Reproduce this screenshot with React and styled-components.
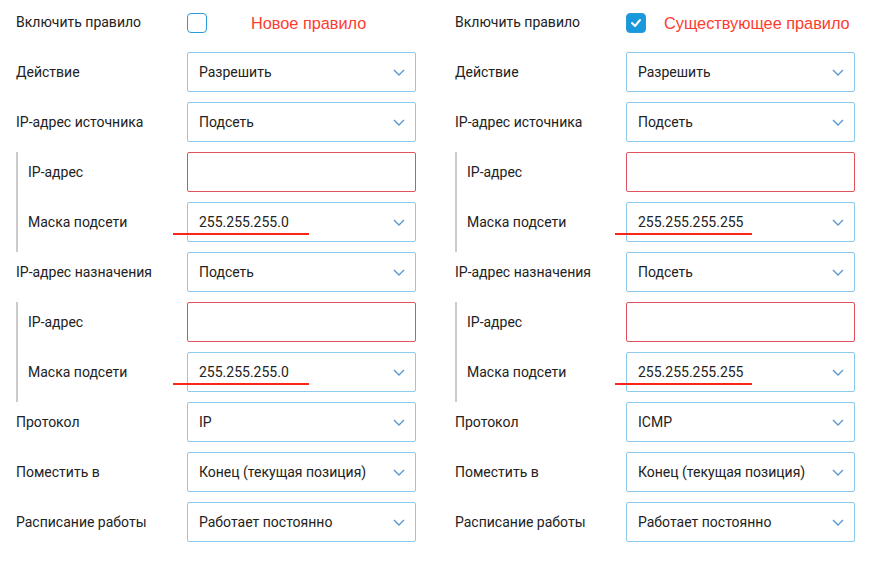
import React from "react";
import styled, {createGlobalStyle} from "styled-components";

const Global = createGlobalStyle`
    html, body {
        margin: 0;
        background: #fff;
    }
    body {
        font-family: Roboto, "Liberation Sans", sans-serif;
        color: #222;
    }
`;

const Page = styled.div`
    display: grid;
    grid-template-columns: 400px 400px;
    column-gap: 39px;
    padding: 2px 0 0 16px;
`;

const Column = styled.div`
    display: flex;
    flex-direction: column;
`;

const Row = styled.div`
    display: flex;
    align-items: center;
    height: 40px;
    margin-bottom: 10px;
    white-space: nowrap;
`;

const Label = styled.div`
    width: ${p => p.$nested ? 159 : 171}px;
    font-size: 14px;
    line-height: 16px;
    color: #222;
    flex-shrink: 0;
`;

const Group = styled.div`
    border-left: 2px solid #cbcbcb;
    padding-left: 10px;
    display: flex;
    flex-direction: column;
`;

const Box = styled.div`
    position: relative;
    box-sizing: border-box;
    width: 230px;
    height: 40px;
    border: 1px solid ${p => p.$error ? "#e0535d" : "#8ccbec"};
    border-radius: 2px;
    display: flex;
    align-items: center;
    justify-content: space-between;
    padding: 0 10px 0 11px;
    font-size: 14px;
    color: #222;
`;

const Strike = styled.div`
    position: absolute;
    left: ${p => p.$left}px;
    width: ${p => p.$width}px;
    top: 30px;
    height: 2px;
    background: #fb2518;
`;

const Check = styled.div`
    box-sizing: border-box;
    width: 20px;
    height: 20px;
    border-radius: 4px;
    border: 1.5px solid #2a9ad8;
    background: ${p => p.$on ? "#1a98dc" : "#fff"};
    display: flex;
    align-items: center;
    justify-content: center;
    flex-shrink: 0;
    margin: 2px ${p => p.$gap}px 0 0;
`;

const Note = styled.span`
    font-family: "Liberation Sans", Arial, sans-serif;
    font-size: 16.3px;
    color: #fd3b2f;
    margin-top: 2px;
`;

const Chevron = () => (
    <svg width="12" height="7" viewBox="0 0 12 7">
        <polyline points="1,1 6,6 11,1" fill="none" stroke="#5a97d2" strokeWidth="1.4"/>
    </svg>
);

const Select = ({value, strike}) => (
    <Box>
        <span>{value}</span>
        <Chevron/>
        {strike && <Strike $left={strike[0]} $width={strike[1]}/>}
    </Box>
);

const Field = ({label, nested, children}) => (
    <Row>
        <Label $nested={nested}>{label}</Label>
        {children}
    </Row>
);

const SubnetGroup = ({mask, strike}) => (
    <Group>
        <Field label="IP-адрес" nested><Box $error/></Field>
        <Field label="Маска подсети" nested><Select value={mask} strike={strike}/></Field>
    </Group>
);

const RuleForm = ({checked, note, noteGap, protocol, mask, strike}) => (
    <Column>
        <Field label="Включить правило">
            <Check $on={checked} $gap={noteGap}>
                {checked && (
                    <svg width="12" height="10" viewBox="0 0 12 10">
                        <polyline points="2,5 5,8 10,2" fill="none" stroke="#fff" strokeWidth="2"
                                  strokeLinecap="round" strokeLinejoin="round"/>
                    </svg>
                )}
            </Check>
            <Note>{note}</Note>
        </Field>
        <Field label="Действие"><Select value="Разрешить"/></Field>
        <Field label="IP-адрес источника"><Select value="Подсеть"/></Field>
        <SubnetGroup mask={mask} strike={strike}/>
        <Field label="IP-адрес назначения"><Select value="Подсеть"/></Field>
        <SubnetGroup mask={mask} strike={strike}/>
        <Field label="Протокол"><Select value={protocol}/></Field>
        <Field label="Поместить в"><Select value="Конец (текущая позиция)"/></Field>
        <Field label="Расписание работы"><Select value="Работает постоянно"/></Field>
    </Column>
);

export default function App() {
    return <>
        <Global/>
        <Page>
            <RuleForm note="Новое правило" noteGap={44} protocol="IP"
                      mask="255.255.255.0" strike={[-15, 136]}/>
            <RuleForm checked note="Существующее правило" noteGap={18} protocol="ICMP"
                      mask="255.255.255.255" strike={[-12, 137]}/>
        </Page>
    </>;
}
